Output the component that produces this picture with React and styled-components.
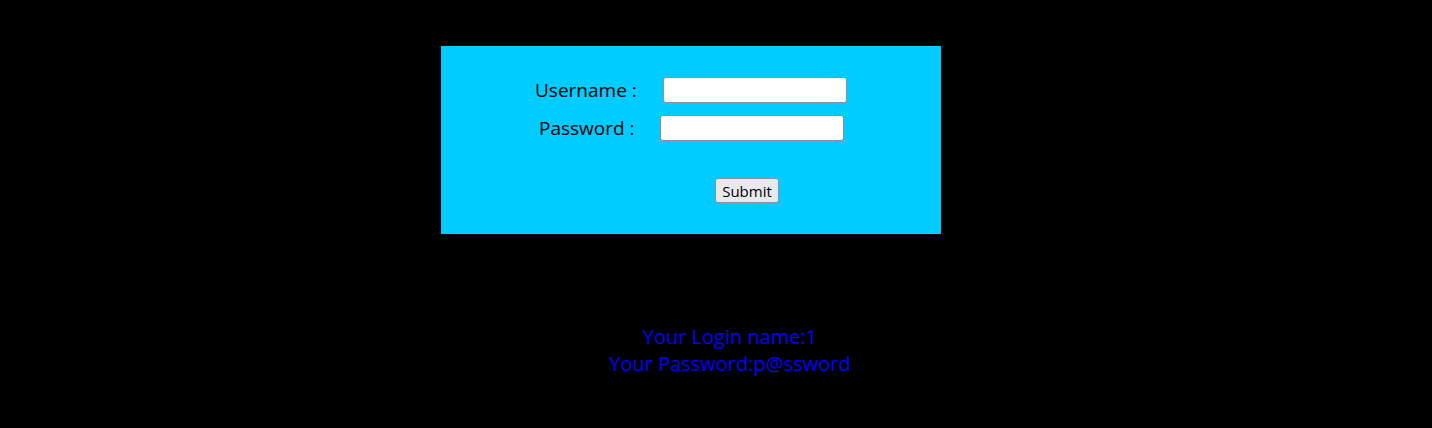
import React from 'react'
import styled, { createGlobalStyle } from 'styled-components'

const GlobalStyle = createGlobalStyle`
    html, body {
        margin:0;
        background:#000;
    }
    body {
        font-family:"Open Sans", "Noto Sans", sans-serif;
    }
`

function App() {
    return (
        <Page>
            <GlobalStyle />
            <LoginBox>
                <Row indent={94}>
                    <Label width={128}>Username :</Label>
                    <Input type="text" />
                </Row>
                <Row indent={98}>
                    <Label width={121}>Password :</Label>
                    <Input type="password" />
                </Row>
                <ButtonRow>
                    <Submit>Submit</Submit>
                </ButtonRow>
            </LoginBox>
            <Result>
                <div>Your Login name:1</div>
                <div>Your Password:p@ssword</div>
            </Result>
        </Page>
    )
}

export default App

const Page = styled.div`
    width:1432px;
    height:428px;
    background:#000;
    padding-top:46px;
    box-sizing:border-box;
`

const LoginBox = styled.div`
    margin-left:441px;
    width:500px;
    height:188px;
    background:#00ccff;
    box-sizing:border-box;
    padding-top:31px;
`

const Row = styled.div`
    display:flex;
    align-items:center;
    height:26px;
    padding-left:${p => p.indent}px;
    margin-bottom:12px;
`

const Label = styled.span`
    width:${p => p.width}px;
    font-size:19px;
    color:#000;
    line-height:26px;
    white-space:nowrap;
`

const Input = styled.input`
    margin:0;
    width:184px;
    height:26px;
    box-sizing:border-box;
    border:1px solid #8f8f9d;
    border-radius:3px;
    background:#fff;
    padding:2px 4px;
`

const ButtonRow = styled.div`
    padding-left:274px;
    padding-top:25px;
`

const Submit = styled.button`
    width:64px;
    height:25px;
    font-family:"Open Sans", sans-serif;
    font-size:15px;
    color:#000;
    background:#e9e9ed;
    border:1px solid #8f8f9d;
    border-radius:3px;
    padding:0;
`

const Result = styled.div`
    margin-top:89px;
    width:1460px;
    text-align:center;
    color:#0000ff;
    font-size:20px;
    line-height:27px;
`
